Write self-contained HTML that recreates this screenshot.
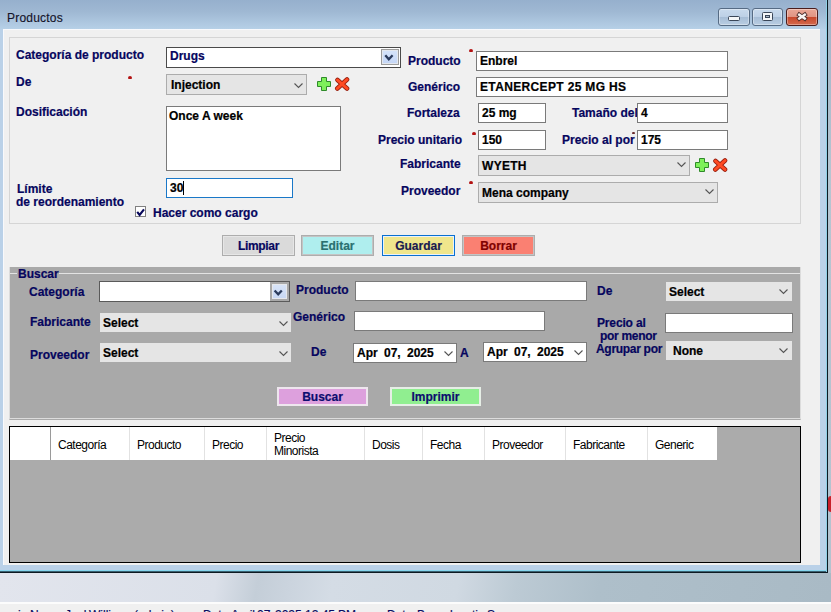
<!DOCTYPE html>
<html><head><meta charset="utf-8">
<style>
*{box-sizing:border-box;margin:0;padding:0}
html,body{width:831px;height:612px;overflow:hidden}
body{position:relative;font-family:"Liberation Sans",sans-serif;background:#a9bac7}
.a{position:absolute}
#desk{left:0;top:573px;width:831px;height:29px;background:linear-gradient(100deg,#e2e5ed 0%,#dbe0e9 26%,#c4ced8 31%,#cbd4de 35%,#d4dce5 40%,#d0d9e2 55%,#bccad4 62%,#aebfca 72%,#a9bac5 100%)}
#strip{left:0;top:602px;width:831px;height:10px;background:#f0f0f0;border-top:2px solid #fcfcfc;overflow:hidden}
#strip span{position:absolute;top:4px;font-size:12px;color:#0a0a60;-webkit-text-stroke:0.2px #0a0a60;white-space:pre}
#rside{left:828px;top:0;width:3px;height:573px;background:linear-gradient(#9fb4c8,#b6c5d1 30%,#b4c3cf)}
#redb{left:828px;top:496px;width:3px;height:16px;background:#c8202a;border-radius:8px 0 0 8px}
#win{left:0;top:0;width:828px;height:573px;background:#bad1e8;border-right:1px solid #0c1a22;border-bottom:1px solid #0c1a22}
#wcy{left:0;top:570px;width:827px;height:2px;background:#86d6ee;border-bottom:1px solid #3a6070}
#wcy2{left:826px;top:0;width:1px;height:572px;background:#8fd0e6}
#title{left:0;top:0;width:826px;height:29px;background:linear-gradient(#96b0cd 0%,#9fb8d3 40%,#b6d0e7 100%)}
#ttl{left:7px;top:11px;font-size:12px;color:#14142a;letter-spacing:0.2px;-webkit-text-stroke:0.15px #14142a}
.tb{top:8px;height:18px;border:1px solid #566b84;border-radius:3px;background:linear-gradient(#c9daed 0%,#bdd0e6 50%,#a6bdd6 51%,#b9cde2 100%);box-shadow:inset 0 0 0 1px rgba(255,255,255,0.35)}
#client{left:3px;top:29px;width:817px;height:536px;background:#f0f0f0;border-top:1px solid #f8f9fc;border-left:1px solid #f8f9fc}
.lbl{position:absolute;font-size:12px;font-weight:bold;color:#06065e;-webkit-text-stroke:0.2px #06065e;white-space:nowrap;line-height:14px}
.txt{position:absolute;background:#fff;border:1px solid #7a7a7a;font-size:12px;font-weight:bold;color:#000;white-space:nowrap;line-height:14px;padding:2px 0 0 3px;-webkit-text-stroke:0.2px #000}
.cmb{position:absolute;background:#e5e5e5;border:1px solid #acacac;font-size:12px;font-weight:bold;color:#000;white-space:nowrap;line-height:14px;padding:2px 0 0 3px;-webkit-text-stroke:0.2px #000}
.chev{position:absolute;width:9px;height:5px}
.btn{position:absolute;font-size:12px;font-weight:bold;text-align:center;line-height:19px;padding-top:1px;border:1px solid #adadad;box-shadow:inset 0 0 0 1px #e6e6e6;-webkit-text-stroke:0.2px currentColor}
.dot{position:absolute;width:4px;height:3px;background:#b31212;border-radius:2px 2px 1px 1px}
.hdr{position:absolute;top:427px;height:33px;font-size:12px;color:#000;line-height:13px;border-right:1px solid #e2e2e2;background:#fff}
.hdr span{position:absolute;left:7px;top:12px;white-space:nowrap;letter-spacing:-0.5px}
</style></head><body>
<div id="desk" class="a"></div>
<div id="strip" class="a"><span style="left:18px">in</span><span style="left:30px">Name</span><span style="left:65px">Jack</span><span style="left:89px">Williams</span><span style="left:134px">(admin)</span><span style="left:203px">Date</span><span style="left:231px">April</span><span style="left:257px">07,</span><span style="left:275px">2025</span><span style="left:305px">12:45</span><span style="left:338px">PM</span><span style="left:387px">Data</span><span style="left:417px">Base</span><span style="left:450px">location:</span><span style="left:487px">S</span></div>
<div id="rside" class="a"></div><div id="redb" class="a"></div>
<div id="win" class="a"></div><div id="wcy" class="a"></div><div id="wcy2" class="a"></div>
<div id="title" class="a"></div>
<div id="ttl" class="a">Productos</div>
<div class="a tb" style="left:718px;width:32px"></div>
<div class="a tb" style="left:752px;width:31px"></div>
<div class="a tb" style="left:786px;width:32px;border-color:#4a1d1d;background:linear-gradient(#eaa796 0%,#e09482 50%,#c8482c 51%,#d46a4e 100%)"></div>
<div id="client" class="a"></div>

<!-- top group -->
<div class="a" style="left:9px;top:37px;width:792px;height:187px;border:1px solid #d5d5d5"></div>

<div class="lbl" style="left:16px;top:48px">Categoría de producto</div>
<div class="lbl" style="left:16px;top:75px">De</div>

<div class="lbl" style="left:16px;top:105px">Dosificación</div>
<div class="lbl" style="left:17px;top:182px">Límite</div>
<div class="lbl" style="left:16px;top:195px">de reordenamiento</div>

<div class="txt" style="left:166px;top:47px;width:235px;height:21px;color:#06065e;-webkit-text-stroke:0.2px #06065e;padding:1px 0 0 3px;border-color:#4a4a4a">Drugs</div>
<div class="a" style="left:381px;top:49px;width:18px;height:16px;background:linear-gradient(#d6e4fa,#c4d6f6);border:1px solid #9c9c9c;box-shadow:inset 0 0 0 1px #e4e8ee"><svg class="a" style="left:2px;top:4px" width="12" height="8"><polyline points="1.3,1.3 4.8,5.3 8.6,1.3" fill="none" stroke="#2b3b5c" stroke-width="2.3"/></svg></div>

<div class="cmb" style="left:166px;top:74px;width:141px;height:21px;padding:3px 0 0 4px">Injection</div>

<div class="txt" style="left:166px;top:106px;width:175px;height:65px;padding-left:2px">Once A week</div>
<div class="txt" style="left:166px;top:178px;width:127px;height:20px;border-color:#1a78c8">30</div>

<div class="a" style="left:135px;top:206px;width:11px;height:11px;border:1px solid #808080;background:#fff"></div>
<div class="lbl" style="left:153px;top:206px">Hacer como cargo</div>

<div class="lbl" style="left:408px;top:54px">Producto</div>

<div class="txt" style="left:476px;top:51px;width:252px;height:20px">Enbrel</div>
<div class="lbl" style="left:408px;top:80px">Genérico</div>
<div class="txt" style="left:476px;top:77px;width:252px;height:20px;letter-spacing:0.35px">ETANERCEPT 25 MG HS</div>
<div class="lbl" style="left:407px;top:106px">Fortaleza</div>
<div class="txt" style="left:478px;top:103px;width:68px;height:20px">25 mg</div>
<div class="lbl" style="left:572px;top:106px">Tamaño del</div>
<div class="txt" style="left:637px;top:103px;width:91px;height:20px">4</div>
<div class="lbl" style="left:378px;top:133px">Precio unitario</div>

<div class="txt" style="left:478px;top:130px;width:68px;height:20px">150</div>
<div class="lbl" style="left:562px;top:133px">Precio al por</div>

<div class="txt" style="left:637px;top:130px;width:91px;height:20px">175</div>
<div class="lbl" style="left:400px;top:157px">Fabricante</div>
<div class="cmb" style="left:478px;top:155px;width:212px;height:21px;padding-top:3px;letter-spacing:0.3px">WYETH</div>
<div class="lbl" style="left:401px;top:184px">Proveedor</div>

<div class="cmb" style="left:478px;top:182px;width:240px;height:21px;padding-top:3px">Mena company</div>

<div class="dot" style="left:128px;top:76px"></div><div class="dot" style="left:469px;top:49px"></div><div class="dot" style="left:472px;top:132px"></div><div class="dot" style="left:632px;top:132px;width:3px;height:2px;background:#6a2a2a"></div><div class="dot" style="left:469px;top:181px"></div>
<!-- buttons -->
<div class="btn" style="left:222px;top:235px;width:73px;height:21px;background:#dadada;color:#06065e;letter-spacing:-0.3px">Limpiar</div>
<div class="btn" style="left:301px;top:235px;width:73px;height:21px;background:#afeeee;color:#2a7070;box-shadow:inset 0 0 0 1px #c4c4c4">Editar</div>
<div class="btn" style="left:382px;top:235px;width:73px;height:21px;background:#f0e68c;color:#1a1a50;border:1px solid #0a70d0;box-shadow:inset 0 0 0 1px #e8f2fc">Guardar</div>
<div class="btn" style="left:462px;top:235px;width:73px;height:21px;background:#fa8072;color:#800000;box-shadow:inset 0 0 0 1px #c4c4c4">Borrar</div>

<!-- search panel -->
<div class="a" style="left:9px;top:267px;width:792px;height:153px;background:#a9a9a9;border-left:1px solid #dcdcdc;border-right:1px solid #dcdcdc;border-bottom:1px solid #a9a9a9"></div><div class="a" style="left:9px;top:418px;width:792px;height:1px;background:#dcdcdc"></div>
<div class="a" style="left:10px;top:273px;width:790px;height:1px;background:#e3e3e3"></div>
<div class="a" style="left:17px;top:270px;width:42px;height:8px;background:#a9a9a9"></div>
<div class="lbl" style="left:18px;top:267px">Buscar</div>

<div class="lbl" style="left:29px;top:285px">Categoría</div>
<div class="txt" style="left:99px;top:281px;width:191px;height:21px;border-color:#5a5a5a"></div>
<div class="a" style="left:270px;top:282px;width:19px;height:19px;background:linear-gradient(#d8e4f8,#c8d8f4);border:2px solid #a8a8a8;box-shadow:inset 0 0 0 1px #e6e8ec"><svg class="a" style="left:1px;top:5px" width="12" height="9"><polyline points="1.6,1.5 5.2,5.3 8.8,1.5" fill="none" stroke="#2b3b5c" stroke-width="2.3"/></svg></div>
<div class="lbl" style="left:296px;top:283px">Producto</div>
<div class="txt" style="left:355px;top:281px;width:232px;height:20px"></div>
<div class="lbl" style="left:597px;top:284px">De</div>
<div class="cmb" style="left:666px;top:282px;width:126px;height:19px;border-color:#e5e5e5;padding:2px 0 0 2px">Select</div>

<div class="lbl" style="left:30px;top:315px">Fabricante</div>
<div class="cmb" style="left:100px;top:313px;width:191px;height:19px;border-color:#e5e5e5;padding:2px 0 0 2px">Select</div>
<div class="lbl" style="left:293px;top:310px">Genérico</div>
<div class="txt" style="left:354px;top:311px;width:191px;height:20px"></div>
<div class="lbl" style="left:597px;top:316px;letter-spacing:-0.15px">Precio al</div>
<div class="lbl" style="left:600px;top:329px;letter-spacing:-0.3px"> por menor</div>
<div class="txt" style="left:665px;top:313px;width:128px;height:20px"></div>

<div class="lbl" style="left:30px;top:348px">Proveedor</div>
<div class="cmb" style="left:100px;top:343px;width:191px;height:19px;border-color:#e5e5e5;padding:2px 0 0 2px">Select</div>
<div class="lbl" style="left:311px;top:345px">De</div>
<div class="txt" style="left:353px;top:343px;width:104px;height:20px;word-spacing:3px">Apr 07, 2025</div>
<div class="lbl" style="left:460px;top:346px">A</div>
<div class="txt" style="left:483px;top:342px;width:104px;height:20px;word-spacing:3px">Apr 07, 2025</div>
<div class="lbl" style="left:596px;top:342px;letter-spacing:-0.3px">Agrupar por</div>
<div class="cmb" style="left:666px;top:341px;width:126px;height:19px;border-color:#e5e5e5;padding:2px 0 0 6px">None</div>

<div class="btn" style="left:277px;top:387px;width:91px;height:19px;background:#dda0dd;color:#0c0c6e;border:2px solid #eee6ee;box-shadow:none;line-height:16px;padding-top:0">Buscar</div>
<div class="btn" style="left:390px;top:387px;width:91px;height:19px;background:#90ee90;color:#0c0c6e;border:2px solid #e6eee6;box-shadow:none;line-height:16px;padding-top:0">Imprimir</div>

<!-- grid -->
<div class="a" style="left:9px;top:426px;width:792px;height:137px;background:#ababab;border:1px solid #000"></div>
<div class="hdr" style="left:10px;width:41px;border-right-color:#9a9a9a"></div>
<div class="hdr" style="left:51px;width:79px"><span>Categoría</span></div>
<div class="hdr" style="left:130px;width:75px"><span>Producto</span></div>
<div class="hdr" style="left:205px;width:62px"><span>Precio</span></div>
<div class="hdr" style="left:267px;width:98px"><span style="top:5px">Precio<br>Minorista</span></div>
<div class="hdr" style="left:365px;width:58px"><span>Dosis</span></div>
<div class="hdr" style="left:423px;width:62px"><span>Fecha</span></div>
<div class="hdr" style="left:485px;width:81px"><span>Proveedor</span></div>
<div class="hdr" style="left:566px;width:82px"><span>Fabricante</span></div>
<div class="hdr" style="left:648px;width:69px;border-right:none"><span>Generic</span></div>

<!-- chevrons -->
<svg class="a" style="left:294px;top:83px" width="10" height="6"><polyline points="0.5,0.5 4.5,4.5 8.5,0.5" fill="none" stroke="#555" stroke-width="1.1"/></svg>
<svg class="a" style="left:677px;top:162px" width="10" height="6"><polyline points="0.5,0.5 4.5,4.5 8.5,0.5" fill="none" stroke="#555" stroke-width="1.1"/></svg>
<svg class="a" style="left:705px;top:189px" width="10" height="6"><polyline points="0.5,0.5 4.5,4.5 8.5,0.5" fill="none" stroke="#555" stroke-width="1.1"/></svg>
<svg class="a" style="left:279px;top:351px" width="10" height="6"><polyline points="0.5,0.5 4.5,4.5 8.5,0.5" fill="none" stroke="#555" stroke-width="1.1"/></svg>
<svg class="a" style="left:279px;top:321px" width="10" height="6"><polyline points="0.5,0.5 4.5,4.5 8.5,0.5" fill="none" stroke="#555" stroke-width="1.1"/></svg>
<svg class="a" style="left:779px;top:289px" width="10" height="6"><polyline points="0.5,0.5 4.5,4.5 8.5,0.5" fill="none" stroke="#555" stroke-width="1.1"/></svg>
<svg class="a" style="left:779px;top:348px" width="10" height="6"><polyline points="0.5,0.5 4.5,4.5 8.5,0.5" fill="none" stroke="#555" stroke-width="1.1"/></svg>
<svg class="a" style="left:444px;top:351px" width="10" height="6"><polyline points="0.5,0.5 4.5,4.5 8.5,0.5" fill="none" stroke="#555" stroke-width="1.1"/></svg>
<svg class="a" style="left:574px;top:350px" width="10" height="6"><polyline points="0.5,0.5 4.5,4.5 8.5,0.5" fill="none" stroke="#555" stroke-width="1.1"/></svg>

<!-- icons -->
<svg class="a" style="left:317px;top:77px" width="15" height="15"><path d="M4.5 0.5H9.5V4.5H13.5V9.5H9.5V13.5H4.5V9.5H0.5V4.5H4.5Z" fill="#7ef05a" stroke="#2f8a2a" stroke-width="1"/></svg><svg class="a" style="left:334px;top:77px" width="16" height="15"><g stroke-linecap="round"><path d="M3.5 3L13 11.5M13 2.5L3.3 11.5" stroke="#9a2010" stroke-width="4.6"/><path d="M3.5 3L13 11.5M13 2.5L3.3 11.5" stroke="#ff4a22" stroke-width="3"/></g></svg><svg class="a" style="left:695px;top:158px" width="15" height="15"><path d="M4.5 0.5H9.5V4.5H13.5V9.5H9.5V13.5H4.5V9.5H0.5V4.5H4.5Z" fill="#7ef05a" stroke="#2f8a2a" stroke-width="1"/></svg><svg class="a" style="left:712px;top:158px" width="16" height="15"><g stroke-linecap="round"><path d="M3.5 3L13 11.5M13 2.5L3.3 11.5" stroke="#9a2010" stroke-width="4.6"/><path d="M3.5 3L13 11.5M13 2.5L3.3 11.5" stroke="#ff4a22" stroke-width="3"/></g></svg>
<svg class="a" style="left:136px;top:208px" width="10" height="9"><polyline points="1.2,3.8 3.6,7 8,1.3" fill="none" stroke="#08085a" stroke-width="2.1"/></svg>
<div class="a" style="left:183px;top:181px;width:1px;height:14px;background:#000"></div>
<div class="a" style="left:728px;top:16px;width:12px;height:5px;background:#f4f6f8;border:1px solid #3a4658;border-radius:1.5px"></div>
<div class="a" style="left:762px;top:12px;width:11px;height:9px;background:#f4f6f8;border:1px solid #3a4658;border-radius:1.5px"><div class="a" style="left:2px;top:2px;width:5px;height:3px;border:1px solid #3a4658;background:#aab8c8"></div></div>
<svg class="a" style="left:795px;top:10px" width="14" height="13"><g stroke-linecap="butt"><path d="M2.5 3.5L11.5 9.8M11.5 3.5L2.5 9.8" stroke="#4a2a28" stroke-width="4.2"/><path d="M3.2 4L10.8 9.3M10.8 4L3.2 9.3" stroke="#f8f4f2" stroke-width="2.6"/></g></svg>
</body></html>
